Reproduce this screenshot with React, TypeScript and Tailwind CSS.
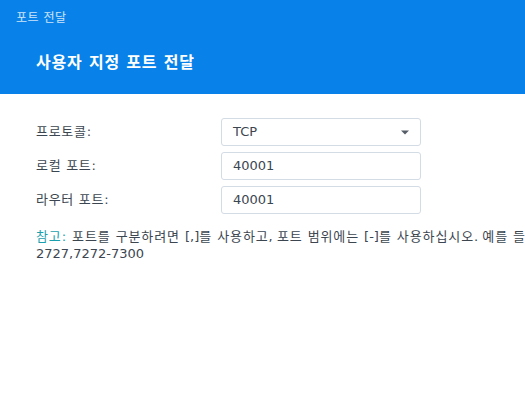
import React from "react";

const font = { fontFamily: '"DejaVu Sans", "Noto Sans CJK KR", sans-serif' };

function K({ children }: { children: React.ReactNode }) {
  return <span className="tracking-[0.9px]">{children}</span>;
}

function Row({ label, children }: { label: string; children: React.ReactNode }) {
  return (
    <div className="flex items-center h-[28px]">
      <div className="w-[185px] text-[13px] text-[#3c4650] tracking-[0.7px]">{label}</div>
      {children}
    </div>
  );
}

export default function App() {
  return (
    <div className="w-[525px] h-[409px] overflow-hidden bg-white" style={font}>
      <div className="h-[94px] bg-[#0882e8] flex flex-col">
        <div className="pl-[16px] pt-[9px] h-[18px] leading-[18px] text-[12px] tracking-[0.5px] text-white/80">포트 전달</div>
        <div className="pl-[36px] pt-[35px] text-[16px] leading-[20px] font-bold tracking-[0.8px] text-white">사용자 지정 포트 전달</div>
      </div>
      <div className="pl-[36px] pt-[24px] flex flex-col gap-[6px]">
        <Row label="프로토콜:">
          <div className="w-[200px] h-[28px] border border-[#d3dbe4] rounded-[3px] flex items-center justify-between pl-[11px] pr-[11px] text-[13px] tracking-normal text-[#3c4650]">
            <span>TCP</span>
            <svg width="8" height="5" viewBox="0 0 8 5"><path d="M0 0.5H8L4 4.5Z" fill="#555d66" /></svg>
          </div>
        </Row>
        <Row label="로컬 포트:">
          <div className="w-[200px] h-[28px] border border-[#d3dbe4] rounded-[3px] flex items-center pl-[11px] text-[13px] tracking-normal text-[#3c4650]">40001</div>
        </Row>
        <Row label="라우터 포트:">
          <div className="w-[200px] h-[28px] border border-[#d3dbe4] rounded-[3px] flex items-center pl-[11px] text-[13px] tracking-normal text-[#3c4650]">40001</div>
        </Row>
      </div>
      <div className="pl-[36px] mt-[14px] text-[13px] leading-[17px] text-[#3c4650] whitespace-nowrap">
        <span className="text-[#1a9fae] tracking-[0.9px]">참고:</span>
        <K> 포트를 구분하려면 </K>[,]<K>를 사용하고</K>, <K>포트 범위에는 </K>[-]<K>를 사용하십시오</K>. <K>예를 들면</K>
        <br />
        2727,7272-7300
      </div>
    </div>
  );
}
